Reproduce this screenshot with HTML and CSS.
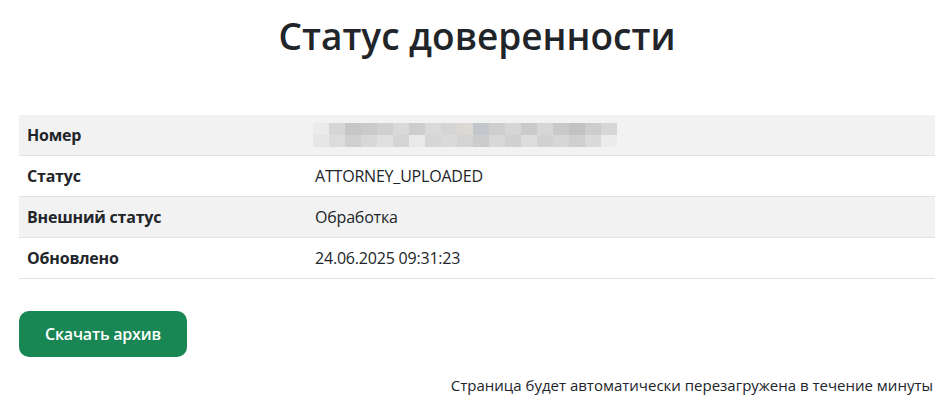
FILE: index.html
```html
<!DOCTYPE html>
<html lang="ru">
<head>
    <meta charset="UTF-8">
    <meta name="viewport" content="width=device-width, initial-scale=1.0">
    <title>Статус доверенности</title>
    <link rel="stylesheet" href="styles.css">
</head>
<body>
    <div class="page">
        <h1 class="page-title">Статус доверенности</h1>

        <table class="status-table">
            <tr>
                <th>Номер</th>
                <td><span class="masked"></span></td>
            </tr>
            <tr>
                <th>Статус</th>
                <td>ATTORNEY_UPLOADED</td>
            </tr>
            <tr>
                <th>Внешний статус</th>
                <td>Обработка</td>
            </tr>
            <tr>
                <th>Обновлено</th>
                <td>24.06.2025 09:31:23</td>
            </tr>
        </table>

        <a href="#" class="download-button">Скачать архив</a>

        <p class="reload-note">Страница будет автоматически перезагружена в течение минуты</p>
    </div>
</body>
</html>
```

FILE: styles.css
```css
body {
    margin: 0;
    font-family: 'Open Sans', 'Noto Sans', sans-serif;
    font-size: 16px;
    line-height: 1.5;
    color: #212529;
    background-color: #fff;
}
.page {
    padding: 0 12px 0 19px;
}
.page-title {
    margin: 0;
    padding-top: 14px;
    font-size: 37px;
    font-weight: 600;
    line-height: 1.2;
    text-align: center;
}
.status-table {
    width: 100%;
    margin-top: 57px;
    border-collapse: collapse;
}
.status-table th,
.status-table td {
    padding: 8px;
    text-align: left;
    vertical-align: top;
    border-bottom: 1px solid #dee2e6;
}
.status-table th {
    width: 272px;
    font-weight: 700;
    letter-spacing: -0.2px;
}
.status-table td {
    letter-spacing: -0.2px;
}
.status-table tr:nth-child(odd) {
    background-color: #f2f2f2;
}
.masked {
    display: block;
    width: 304px;
    height: 24px;
    margin-left: -2px;
    background:
        linear-gradient(90deg,
            #ebebeb 0 16px, #d6d6d6 16px 32px, #c6c6c6 32px 48px, #cacaca 48px 64px,
            #d0d0d0 64px 80px, #d9d9d9 80px 96px, #cdcdcd 96px 112px, #dadada 112px 128px,
            #d5d5d5 128px 144px, #dcd8d4 144px 160px, #c3c6ca 160px 176px, #cecece 176px 192px,
            #d6d6d6 192px 208px, #cacaca 208px 224px, #d6d6d6 224px 240px, #c9c9c9 240px 256px,
            #c2c2c2 256px 272px, #cdcdcd 272px 288px, #d6d6d6 288px 304px) top / 100% 12px no-repeat,
        linear-gradient(90deg,
            #e6e6e6 0 16px, #dcdcdc 16px 32px, #cfcfcf 32px 48px, #d8d8d8 48px 64px,
            #e0e0e0 64px 80px, #d4d4d4 80px 96px, #e9e9e9 96px 112px, #d6d6d6 112px 128px,
            #dadada 128px 144px, #d4d4d4 144px 160px, #cccccc 160px 176px, #d8d8d8 176px 192px,
            #d0d0d0 192px 208px, #dcdcdc 208px 224px, #d2d2d2 224px 240px, #d6d6d6 240px 256px,
            #cfcfcf 256px 272px, #dadada 272px 288px, #ececec 288px 304px) bottom / 100% 12px no-repeat;
}
.download-button {
    display: inline-block;
    margin-top: 32px;
    padding: 11px 26px;
    background-color: #198754;
    color: #fff;
    font-weight: 600;
    letter-spacing: -0.2px;
    text-decoration: none;
    border-radius: 10px;
}
.reload-note {
    margin: 17px 2px 0 0;
    font-size: 15px;
    text-align: right;
}
```
